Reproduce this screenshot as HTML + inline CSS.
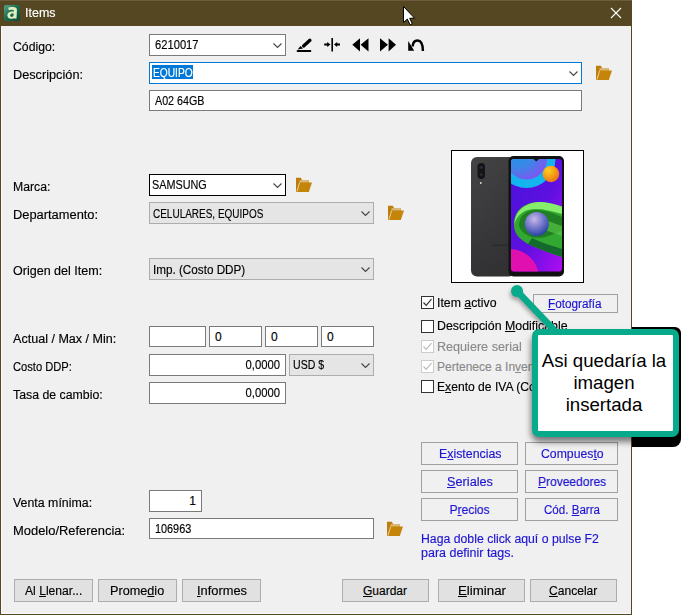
<!DOCTYPE html>
<html><head><meta charset="utf-8">
<style>
*{box-sizing:border-box}
html,body{margin:0;padding:0}
body{width:681px;height:615px;overflow:hidden;position:relative;background:#fff;font-family:"Liberation Sans",sans-serif;font-size:12px;color:#000}
.a{position:absolute}
.t{position:absolute;white-space:nowrap;line-height:14px;font-size:12px;transform-origin:0 0;-webkit-text-stroke:0.15px currentColor}
.box{position:absolute;background:#fff;border:1px solid #7a7a7a}
.cb{position:absolute;background:#e5e5e5;border:1px solid #adadad}
.btn{position:absolute;background:#e1e1e1;border:1px solid #adadad}
.btn2{position:absolute;background:#f0f0f0;border:1px solid #a0a0a0}
.bl{color:#1e14d2}
.dis{color:#8a8a8a}
u{text-decoration:underline}
.chk{position:absolute;width:13px;height:13px;border:1px solid #333;background:#fff}
.chk.d{border-color:#ccc}
svg{position:absolute;overflow:visible}
</style></head><body>
<!-- window frame -->
<div class="a" style="left:0;top:0;width:632px;height:615px;background:#554722"></div>
<div class="a" style="left:0;top:0;width:632px;height:1px;background:#6e5c3c"></div>
<div class="a" style="left:1px;top:26px;width:630px;height:588px;background:#f0f0f0;border-left:1px solid #fbfbfb;border-bottom:1px solid #fbfbfb"></div>

<!-- title -->
<svg style="left:4px;top:5px" width="16" height="16" viewBox="0 0 16 16">
 <defs><linearGradient id="ig" x1="0" y1="0" x2="1" y2="1"><stop offset="0" stop-color="#5aa888"/><stop offset="0.45" stop-color="#1f6e50"/><stop offset="1" stop-color="#0d4832"/></linearGradient></defs>
 <rect x="0" y="0" width="16" height="16" rx="2" fill="url(#ig)"/>
 <path d="M4.2 2.6C6.2 1.6 10.8 1.6 12.2 3C13 3.8 13 5 12.9 6L12.5 13.6H9.6L9.7 12.9C8.2 14.3 4.4 14.2 3.6 11.6C2.8 8.6 4.4 6.3 9.8 6.5L9.9 5.6C9.7 4.6 7.6 4.4 4.8 5.2Z M6.1 10.6C6.2 12.3 8.9 12.3 9.5 10.8L9.7 8.6C7.4 8.4 6 9 6.1 10.6Z" fill="#dcefc0" fill-rule="evenodd"/>
</svg>
<div class="t" style="left:25px;top:6px;color:#fff;transform:scaleX(1.04)">Items</div>
<svg style="left:610px;top:7px" width="12" height="12"><path d="M1 1L11 11M11 1L1 11" stroke="#fff" stroke-width="1.1"/></svg>

<svg style="left:403px;top:6px" width="14" height="20" viewBox="0 0 14 20"><path d="M0.5 0.5V16.5L4.3 13.1L7.1 18.7L9.3 17.8L6.7 12.3L11.5 12.1Z" fill="#fff" stroke="#000" stroke-width="1" stroke-linejoin="round"/></svg>
<!-- labels -->
<div class="t" style="left:13px;top:40px;transform:scaleX(1.02)">Código:</div>
<div class="t" style="left:13px;top:68px;transform:scaleX(1.06)">Descripción:</div>
<div class="t" style="left:13px;top:180px;transform:scaleX(1.02)">Marca:</div>
<div class="t" style="left:13px;top:208px;transform:scaleX(1.072)">Departamento:</div>
<div class="t" style="left:13px;top:264px;transform:scaleX(1.045)">Origen del Item:</div>
<div class="t" style="left:13px;top:332px;transform:scaleX(1.047)">Actual / Max / Min:</div>
<div class="t" style="left:13px;top:360px;transform:scaleX(0.93)">Costo DDP:</div>
<div class="t" style="left:13px;top:388px;transform:scaleX(1.026)">Tasa de cambio:</div>
<div class="t" style="left:13px;top:496px;transform:scaleX(1.031)">Venta mínima:</div>
<div class="t" style="left:13px;top:524px;transform:scaleX(1.077)">Modelo/Referencia:</div>

<!-- Codigo -->
<div class="box" style="left:149px;top:34px;width:137px;height:22px"></div>
<div class="t" style="left:155px;top:38px;transform:scaleX(0.932)">6210017</div>
<svg style="left:273px;top:43px" width="9" height="6"><path d="M0.5 0.5L4.5 4.5L8.5 0.5" fill="none" stroke="#444" stroke-width="1.1"/></svg>

<!-- toolbar icons -->
<svg style="left:294px;top:35px" width="20" height="20" viewBox="0 0 20 20">
 <path d="M3.6 16H16.3" stroke="#000" stroke-width="2" stroke-linecap="round"/>
 <path d="M9.6 10.9L15.9 5.3" stroke="#000" stroke-width="3.4" stroke-linecap="round"/>
 <path d="M3.7 14.4L6.5 11L9 13.5Z" fill="#000"/>
</svg>
<svg style="left:322px;top:35px" width="20" height="20" viewBox="0 0 20 20">
 <rect x="9.4" y="3" width="1.6" height="13.5" fill="#000"/>
 <path d="M2.2 9.5H6" stroke="#000" stroke-width="2"/>
 <path d="M5.2 7L8.4 9.5L5.2 12Z" fill="#000"/>
 <path d="M18 9.5H14.4" stroke="#000" stroke-width="2"/>
 <path d="M15.2 7L12 9.5L15.2 12Z" fill="#000"/>
</svg>
<svg style="left:350px;top:35px" width="22" height="20" viewBox="0 0 22 20">
 <path d="M2.3 9.8L10 3.2V16.4Z" fill="#000"/>
 <path d="M10.6 9.8L18.5 3.2V16.4Z" fill="#000"/>
</svg>
<svg style="left:378px;top:35px" width="22" height="20" viewBox="0 0 22 20">
 <path d="M2 3.2L9.9 9.8L2 16.4Z" fill="#000"/>
 <path d="M10.6 3.2L18 9.8L10.6 16.4Z" fill="#000"/>
</svg>
<svg style="left:404px;top:34px" width="24" height="20" viewBox="0 0 24 20">
 <path d="M8.6 12.5C8.9 8.6 11 6.6 13.5 6.6C16.5 6.6 18.8 9.5 18.9 17" fill="none" stroke="#000" stroke-width="2.5"/>
 <path d="M4.2 7L4.2 16.7L10.2 16.7Z" fill="#000"/>
</svg>

<!-- Descripcion -->
<div class="box" style="left:149px;top:62px;width:433px;height:22px;border-color:#0078d7"></div>
<div class="a" style="left:152px;top:65px;width:41px;height:14px;background:#0078d7"></div>
<div class="t" style="left:152.5px;top:66px;color:#fff;transform:scaleX(0.85)">EQUIPO</div>
<svg style="left:569px;top:71px" width="9" height="6"><path d="M0.5 0.5L4.5 4.5L8.5 0.5" fill="none" stroke="#444" stroke-width="1.1"/></svg>
<svg style="left:595px;top:65px" width="18" height="16" viewBox="0 0 18 16"><use href="#fold"/></svg>

<div class="box" style="left:149px;top:90px;width:433px;height:21px"></div>
<div class="t" style="left:155px;top:94px;transform:scaleX(0.893)">A02 64GB</div>

<!-- Marca -->
<div class="box" style="left:149px;top:174px;width:137px;height:22px;border-color:#000"></div>
<div class="t" style="left:152px;top:178px;transform:scaleX(0.903)">SAMSUNG</div>
<svg style="left:273px;top:183px" width="9" height="6"><path d="M0.5 0.5L4.5 4.5L8.5 0.5" fill="none" stroke="#444" stroke-width="1.1"/></svg>
<svg style="left:295px;top:177px" width="18" height="16" viewBox="0 0 18 16"><use href="#fold"/></svg>

<div class="cb" style="left:149px;top:202px;width:225px;height:22px"></div>
<div class="t" style="left:153px;top:207px;transform:scaleX(0.832)">CELULARES, EQUIPOS</div>
<svg style="left:361px;top:211px" width="9" height="6"><path d="M0.5 0.5L4.5 4.5L8.5 0.5" fill="none" stroke="#444" stroke-width="1.1"/></svg>
<svg style="left:387px;top:205px" width="18" height="16" viewBox="0 0 18 16"><use href="#fold"/></svg>

<div class="cb" style="left:149px;top:258px;width:225px;height:22px"></div>
<div class="t" style="left:152.5px;top:263px;transform:scaleX(0.974)">Imp. (Costo DDP)</div>
<svg style="left:361px;top:267px" width="9" height="6"><path d="M0.5 0.5L4.5 4.5L8.5 0.5" fill="none" stroke="#444" stroke-width="1.1"/></svg>

<!-- Actual/Max/Min -->
<div class="box" style="left:149px;top:326px;width:57px;height:21px"></div>
<div class="box" style="left:209px;top:326px;width:53px;height:21px"></div>
<div class="box" style="left:265px;top:326px;width:53px;height:21px"></div>
<div class="box" style="left:321px;top:326px;width:53px;height:21px"></div>
<div class="t" style="left:215px;top:330px">0</div>
<div class="t" style="left:271px;top:330px">0</div>
<div class="t" style="left:327px;top:330px">0</div>

<div class="box" style="left:149px;top:354px;width:137px;height:22px"></div>
<div class="t" style="left:200px;top:358px;width:80px;text-align:right;transform:scaleX(0.94);transform-origin:100% 0">0,0000</div>
<div class="cb" style="left:289px;top:354px;width:85px;height:22px"></div>
<div class="t" style="left:293px;top:358px;transform:scaleX(0.88)">USD $</div>
<svg style="left:361px;top:363px" width="9" height="6"><path d="M0.5 0.5L4.5 4.5L8.5 0.5" fill="none" stroke="#444" stroke-width="1.1"/></svg>
<div class="box" style="left:149px;top:382px;width:137px;height:22px"></div>
<div class="t" style="left:200px;top:386px;width:80px;text-align:right;transform:scaleX(0.94);transform-origin:100% 0">0,0000</div>

<div class="box" style="left:149px;top:490px;width:53px;height:22px"></div>
<div class="t" style="left:150px;top:494px;width:46px;text-align:right">1</div>
<div class="box" style="left:149px;top:518px;width:225px;height:21px"></div>
<div class="t" style="left:155px;top:522px;transform:scaleX(0.905)">106963</div>
<svg style="left:386px;top:521px" width="18" height="16" viewBox="0 0 18 16"><use href="#fold"/></svg>

<!-- image -->
<div class="a" style="left:451px;top:150px;width:133px;height:133px;border:1px solid #000;background:#fff"></div>
<svg style="left:452px;top:151px" width="131" height="131" viewBox="452 151 131 131">
 <defs>
  <clipPath id="scr"><rect x="511" y="159" width="51" height="112.5" rx="3"/></clipPath>
  <linearGradient id="bk" x1="0" y1="0" x2="0.3" y2="1"><stop offset="0" stop-color="#424244"/><stop offset="1" stop-color="#303032"/></linearGradient>
  <pattern id="tex" width="3" height="3" patternUnits="userSpaceOnUse" patternTransform="rotate(35)"><rect width="3" height="1.2" fill="#555"/></pattern>
  <linearGradient id="bgp" x1="0" y1="0" x2="1" y2="1"><stop offset="0" stop-color="#4a12da"/><stop offset="0.55" stop-color="#5e10e0"/><stop offset="1" stop-color="#b00cf0"/></linearGradient>
  <radialGradient id="ring" cx="0.3" cy="0.3" r="0.75"><stop offset="0" stop-color="#1c9ae4"/><stop offset="0.55" stop-color="#3c86e8"/><stop offset="1" stop-color="#7c58f0"/></radialGradient>
  <radialGradient id="ball" cx="0.4" cy="0.3" r="0.7"><stop offset="0" stop-color="#c8b8e8"/><stop offset="0.6" stop-color="#6a70c8"/><stop offset="1" stop-color="#2a46a0"/></radialGradient>
  <radialGradient id="orng" cx="0.35" cy="0.3" r="0.8"><stop offset="0" stop-color="#ffd020"/><stop offset="1" stop-color="#e86a10"/></radialGradient>
 </defs>
 <rect x="471" y="157" width="44" height="119.5" rx="6" fill="url(#bk)"/>
 <rect x="471" y="157" width="44" height="119.5" rx="6" fill="url(#tex)" opacity="0.15"/>
 <rect x="492" y="244.5" width="18" height="1.6" fill="#2a2a2a"/>
 <rect x="477.5" y="163" width="7.5" height="16" rx="3.7" fill="#141416"/>
 <circle cx="481.2" cy="167.3" r="1.6" fill="#2a2a40"/>
 <circle cx="481.2" cy="174.5" r="1.6" fill="#2a2a30"/>
 <circle cx="480.8" cy="183" r="0.9" fill="#e8e0c0"/>
 <rect x="508.5" y="156" width="55.5" height="120.5" rx="5" fill="#111"/>
 <g clip-path="url(#scr)">
  <rect x="511" y="159" width="51" height="113" fill="url(#bgp)"/>
  <circle cx="526.5" cy="159" r="29" fill="#14b4ee"/>
  <circle cx="526.5" cy="159" r="20.5" fill="url(#ring)"/>
  <circle cx="551" cy="174" r="8.3" fill="url(#orng)"/>
  <path d="M514 226 C513 208 528 201 542 202 C550 203 556 205 562 207 L562 257 C550 253 538 249 528 244 C519 239 514 233 514 226Z" fill="#32a832"/>
  <path d="M514.5 224 C515 208 529 201.5 542 202 C550 202.6 556 204.5 562 206.5 L562 214 C552 211 544 209 536 209 C524 209 517 215 514.5 224Z" fill="#86ec6c"/>
  <path d="M519 226 C519 215 527 210 536 210 C545 210 553 213 562 217 L562 231 L548 236 C538 240 524 238 519 226Z" fill="#1f7f22"/>
  <path d="M545 220 L562 226 L562 236 L545 230Z" fill="#5fcf4a" opacity="0.6"/>
  <path d="M528 244 C538 249 550 253 562 257 L562 249 C552 246 540 242 532 238Z" fill="#136a2c"/>
  <circle cx="536.8" cy="224" r="12" fill="url(#ball)"/>
  <circle cx="510" cy="278" r="29" fill="#e010b0"/>
 </g>
 <path d="M536.2 159 L533.5 159 L536.2 161.5 L539 159Z" fill="#111"/>
</svg>

<!-- checkboxes -->
<div class="chk" style="left:421px;top:296px"></div>
<svg style="left:421px;top:296px" width="13" height="13"><path d="M2.5 6.5L5.2 9.3L10.5 3.2" fill="none" stroke="#333" stroke-width="1.2"/></svg>
<div class="t" style="left:437px;top:296px;transform:scaleX(1.025)">Item <u>a</u>ctivo</div>
<div class="chk" style="left:421px;top:320px"></div>
<div class="t" style="left:437px;top:319px;transform:scaleX(1.03)">Descripción <u>M</u>odificable</div>
<div class="chk d" style="left:421px;top:340px"></div>
<svg style="left:421px;top:340px" width="13" height="13"><path d="M2.5 6.5L5.2 9.3L10.5 3.2" fill="none" stroke="#bbb" stroke-width="1.2"/></svg>
<div class="t dis" style="left:437px;top:340px;transform:scaleX(1.05)">Requiere serial</div>
<div class="chk d" style="left:421px;top:360px"></div>
<svg style="left:421px;top:360px" width="13" height="13"><path d="M2.5 6.5L5.2 9.3L10.5 3.2" fill="none" stroke="#bbb" stroke-width="1.2"/></svg>
<div class="t dis" style="left:437px;top:360px;transform:scaleX(1.0)">Pertenece a In<u>v</u>entario</div>
<div class="chk" style="left:421px;top:380px"></div>
<div class="t" style="left:437px;top:380px;transform:scaleX(1.01)">E<u>x</u>ento de IVA (Compras)</div>

<div class="btn2" style="left:533px;top:294px;width:85px;height:19px"></div>
<div class="t bl" style="left:548px;top:297px;transform:scaleX(0.98)"><u>F</u>otografía</div>

<div class="btn2" style="left:421px;top:442px;width:97px;height:23px"></div>
<div class="btn2" style="left:525px;top:442px;width:93px;height:23px"></div>
<div class="btn2" style="left:421px;top:470px;width:97px;height:23px"></div>
<div class="btn2" style="left:525px;top:470px;width:93px;height:23px"></div>
<div class="btn2" style="left:421px;top:498px;width:97px;height:23px"></div>
<div class="btn2" style="left:525px;top:498px;width:93px;height:23px"></div>
<div class="t bl" style="left:438.5px;top:447px;transform:scaleX(1.03)">E<u>x</u>istencias</div>
<div class="t bl" style="left:541px;top:447px;transform:scaleX(1.02)">Compues<u>t</u>o</div>
<div class="t bl" style="left:447px;top:475px;transform:scaleX(1.06)"><u>S</u>eriales</div>
<div class="t bl" style="left:538px;top:475px;transform:scaleX(1.0)"><u>P</u>roveedores</div>
<div class="t bl" style="left:449.5px;top:503px;transform:scaleX(1.0)">P<u>r</u>ecios</div>
<div class="t bl" style="left:543.5px;top:503px;transform:scaleX(0.964)">Cód. <u>B</u>arra</div>

<div class="t bl" style="left:421px;top:532px;transform:scaleX(1.022)">Haga doble click aquí o pulse F2</div>
<div class="t bl" style="left:421px;top:546px;transform:scaleX(1.04)">para definir tags.</div>

<div class="btn" style="left:14px;top:579px;width:79px;height:23px"></div>
<div class="btn" style="left:98px;top:579px;width:79px;height:23px"></div>
<div class="btn" style="left:182px;top:579px;width:79px;height:23px"></div>
<div class="btn" style="left:342px;top:579px;width:87px;height:23px"></div>
<div class="btn" style="left:438px;top:579px;width:87px;height:23px"></div>
<div class="btn" style="left:530px;top:579px;width:87px;height:23px"></div>
<div class="t" style="left:25px;top:584px;transform:scaleX(1.01)">Al <u>L</u>lenar...</div>
<div class="t" style="left:110px;top:584px;transform:scaleX(1.055)">Prome<u>d</u>io</div>
<div class="t" style="left:197px;top:584px;transform:scaleX(1.07)"><u>I</u>nformes</div>
<div class="t" style="left:363px;top:584px;transform:scaleX(1.0)"><u>G</u>uardar</div>
<div class="t" style="left:458px;top:584px;transform:scaleX(1.107)"><u>E</u>liminar</div>
<div class="t" style="left:549px;top:584px;transform:scaleX(1.006)"><u>C</u>ancelar</div>

<!-- callout -->
<div class="a" style="left:632px;top:327px;width:49px;height:120px;background:#000;border-radius:0 6px 8px 0"></div>
<div class="a" style="left:532px;top:329px;width:147px;height:108px;border-radius:9px;box-shadow:-1px 5px 6px rgba(0,0,0,0.5)"></div>
<svg style="left:0;top:0" width="681" height="615">
 <defs><filter id="sh" x="-50%" y="-50%" width="200%" height="200%"><feGaussianBlur stdDeviation="2"/></filter></defs>
 <g opacity="0.35" filter="url(#sh)" transform="translate(-1,3)"><path d="M517 291L558 334" stroke="#000" stroke-width="6"/><circle cx="517" cy="291" r="6"/></g>
 <path d="M517 291L558 334" stroke="#08aa8c" stroke-width="6.5"/>
 <circle cx="517" cy="291" r="6" fill="#08aa8c"/>
</svg>
<div class="a" style="left:532px;top:329px;width:147px;height:108px;border:6px solid #08aa8c;border-radius:7px;background:#fff"></div>
<div class="a" style="left:530.5px;top:349.5px;width:147px;text-align:center;font-size:18.67px;line-height:22.2px;color:#000">Asi quedaría la<br>imagen<br>insertada</div>

<svg width="0" height="0" style="position:absolute">
 <defs>
  <g id="fold">
   <path d="M1 0.8H5.8L7.3 3.6H14V15H1Z" fill="#bd7d08"/>
   <rect x="4.5" y="3.2" width="9.3" height="2.6" fill="#dcb878"/>
   <path d="M4.8 5.5H17L13.8 15H1.6Z" fill="#c4850a"/>
   <path d="M4.6 5.7L1.9 14.6" stroke="#f4e6cc" stroke-width="0.8"/>
  </g>
 </defs>
</svg>
</body></html>
